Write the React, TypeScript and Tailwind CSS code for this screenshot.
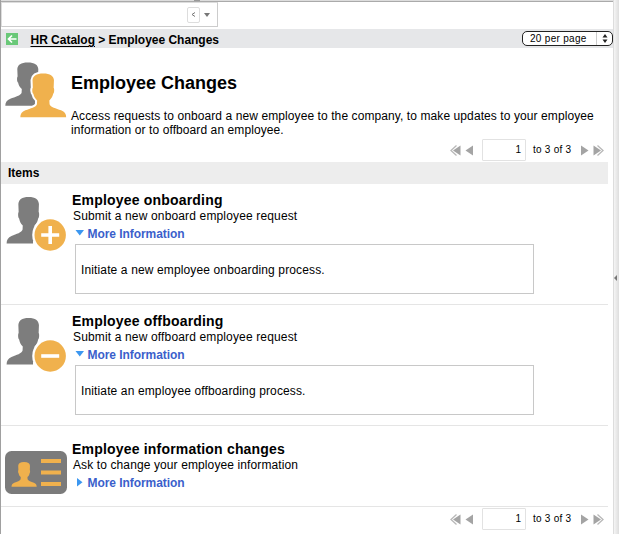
import type { ReactNode } from "react";

const PERSON =
  "M0 46.500C0 43 1.500 40.500 5 39C10 37 15.500 35.500 16.300 32.500L16.500 28.500C14.300 26.500 13.200 24 12.800 21.500C11.700 21 11.400 16 12.300 15L12 7C12.500 2.500 15.500 0 22.500 0C29.500 0 32.500 2.500 33 7L32.700 15C33.600 16 33.300 21 32.200 21.500C31.800 24 30.700 26.500 28.500 28.500L28.700 32.500C29.500 35.500 35 37 40 39C43.500 40.500 45 43 45 46.500Z";

function PeopleIcon() {
  return (
    <svg width="62" height="56" viewBox="0 0 62 56" className="block">
      <path d={PERSON} transform="translate(.3 .5) scale(1 .93)" fill="#7d7d7d" />
      <path d={PERSON} transform="translate(15.300 11.500) scale(1.02 .945)" fill="#f0b14d" stroke="#fff" strokeWidth="4" paintOrder="stroke" />
      <path d="M0 55.500H62V60H0z" fill="#fff" />
    </svg>
  );
}

function BadgePersonIcon({ plus }: { plus: boolean }) {
  return (
    <svg width="61" height="56" viewBox="0 0 61 56" className="block">
      <path d={PERSON} transform="translate(.600 0) scale(.98 1)" fill="#7d7d7d" />
      <circle cx="44.2" cy="38" r="18" fill="#fff" />
      <path d="M27 44H61V56H27z" fill="#fff" />
      <circle cx="44.2" cy="38" r="15.700" fill="#f0b14d" />
      <path d={plus ? "M35.200 38H53.200M44.200 29V47" : "M35.200 38H53.200"} stroke="#fff" strokeWidth="3.600" />
    </svg>
  );
}

function CardIcon() {
  return (
    <svg width="62" height="43" viewBox="0 0 62 43" className="block">
      <rect width="62" height="43" rx="6.500" fill="#7b7b7b" />
      <path d={PERSON} transform="translate(6.500 11) scale(.56 .53)" fill="#f0b14d" />
      <path d="M36 10H56M36 21.500H56M36 33H56" stroke="#f0b14d" strokeWidth="4.200" />
    </svg>
  );
}

function Arrows({ flip }: { flip?: boolean }) {
  return (
    <svg width="24" height="11" viewBox="0 0 24 11" className={flip ? "block -scale-x-100" : "block"}>
      <path d="M6.500 0.500L1 5.500L6.500 10.500" fill="none" stroke="#b8b8b8" strokeWidth="1.300" />
      <path d="M10.500 0.500V10.500L3 5.500z" fill="#a4a4a4" />
      <path d="M23 0.500V10.500L15.500 5.500z" fill="#a4a4a4" />
    </svg>
  );
}

function Pager() {
  return (
    <div className="flex h-[22px] items-center pl-[449px] text-[10px] leading-[22px]">
      <Arrows />
      <div className="ml-2 h-[22px] w-11 rounded-[1px] border border-[#e2e2e2] pr-1 text-right leading-[20px]">1</div>
      <span className="ml-[7px] w-[40px] whitespace-nowrap tracking-[0.25px]">to 3 of 3</span>
      <div className="ml-[7px]">
        <Arrows flip />
      </div>
    </div>
  );
}

function More({ open }: { open: boolean }) {
  return (
    <div className="flex h-[16px] items-center text-xs leading-[16px] font-bold text-[#3b5fcb]">
      <svg width="12" height="12" viewBox="0 0 12 12" className="mr-[3.500px]">
        <path d={open ? "M3.500 2H12L7.800 7.500z" : "M5 1V9.500L10.500 5.200z"} fill="#3c97f0" />
      </svg>
      <a className="whitespace-nowrap tracking-[-0.060px]">More Information</a>
    </div>
  );
}

interface ItemProps {
  icon: ReactNode;
  title: string;
  text: string;
  detail?: string;
}

function Item({ icon, title, text, detail }: ItemProps) {
  return (
    <section className={`mr-[5px] flex border-b border-[#e5e5e5] ${detail ? "h-[121px] pt-2" : "h-[81px] pt-[15px]"}`}>
      <div className={detail ? "w-[71px] pt-[5px] pl-[5px]" : "w-[71px] pt-[10px] pl-[4px]"}>{icon}</div>
      <div>
        <h2 className="h-4 text-sm leading-4 font-bold tracking-[0.19px] whitespace-nowrap">{title}</h2>
        <p className={`h-[15px] pt-px pl-px text-xs leading-[15px] whitespace-nowrap ${detail ? "tracking-[0.15px]" : "tracking-[0.11px]"}`}>{text}</p>
        <div className="pt-[3px]">
          <More open={!!detail} />
        </div>
        {detail && (
          <div className="mt-[2px] ml-[3px] flex h-[50px] w-[459px] items-center border border-[#c8c8c8] pt-0.5 pl-[5px] text-xs tracking-[0.13px]">{detail}</div>
        )}
      </div>
    </section>
  );
}

export default function App() {
  return (
    <div className="flex h-[534px] w-[619px] overflow-hidden bg-white font-['Liberation_Sans',Arial,sans-serif] text-black">
      <main className="w-[613px] border-l border-[#a0a0a0]">
        <div className="h-[2px] border-b border-[#aaa] bg-[#ddd]">
          <div className="ml-[193px] h-px w-[6px] bg-[#999]" />
        </div>
        <div className="flex h-[25px] w-[217px] items-center justify-end border border-t-[#ddd] border-r-[#ccc] border-b-[#ccc] border-l-[#ddd] pr-[7px]">
          <div className="flex h-4 w-[13px] items-center justify-center rounded-[2px] border border-[#ddd]">
            <svg width="5" height="5" viewBox="0 0 5 5"><path d="M4 .5L1 2.500L4 4.500" fill="none" stroke="#777" /></svg>
          </div>
          <svg width="6" height="4" viewBox="0 0 6 4" className="ml-1"><path d="M0 0H6L3 4z" fill="#777" /></svg>
        </div>
        <header className="mt-[2px] flex h-[19px] items-center bg-[#e6e7e9] text-xs font-bold">
          <svg width="12" height="12" viewBox="0 0 12 12" className="ml-[5px]">
            <rect width="12" height="12" fill="#69c878" />
            <path d="M10.500 6H2.500M6 2.500L2.500 6L6 9.500" fill="none" stroke="#fff" strokeWidth="1.700" />
          </svg>
          <nav className="ml-[12.500px] pt-[3px] leading-4 tracking-[-0.020px] whitespace-nowrap">
            <a className="underline underline-offset-2">HR Catalog</a> &gt; Employee Changes
          </nav>
          <div className="ml-auto flex h-[15px] w-[91px] items-center rounded-[5px] border-[1.5px] border-[#222] bg-white pl-[7px] text-[10px] leading-3 font-normal">
            <span className="tracking-[0.3px] whitespace-nowrap">20 per page</span>
            <span className="ml-auto flex h-full w-4 items-center justify-center border-l border-[#ccc]">
              <svg width="6" height="9" viewBox="0 0 6 9"><path d="M0.500 3.500L3 0L5.500 3.500zM0.500 5.500L3 9L5.500 5.500z" fill="#222" /></svg>
            </span>
          </div>
        </header>
        <section className="flex h-[91px] pt-[14px] pl-[4px]">
          <PeopleIcon />
          <div className="ml-1 pt-[10px]">
            <h1 className="h-[22px] text-lg leading-[22px] font-bold whitespace-nowrap">Employee Changes</h1>
            <p className="mt-[15px] text-xs leading-[14px] tracking-[0.09px] whitespace-nowrap">
              Access requests to onboard a new employee to the company, to make updates to your employee
              <br />
              information or to offboard an employee.
            </p>
          </div>
        </section>
        <Pager />
        <h2 className="mt-px mr-[5px] h-[22px] bg-[#ededed] pl-[7px] text-xs leading-[22px] font-bold">Items</h2>
        <Item icon={<BadgePersonIcon plus />} title="Employee onboarding" text="Submit a new onboard employee request" detail="Initiate a new employee onboarding process." />
        <Item icon={<BadgePersonIcon plus={false} />} title="Employee offboarding" text="Submit a new offboard employee request" detail="Initiate an employee offboarding process." />
        <Item icon={<CardIcon />} title="Employee information changes" text="Ask to change your employee information" />
        <div className="pt-px">
          <Pager />
        </div>
      </main>
      <aside className="flex w-[6px] items-center border-l border-[#ddd] bg-gradient-to-r from-[#f5f5f5] to-[#dedede]">
        <svg width="3" height="6" viewBox="0 0 3 6" className="mt-[22px]"><path d="M3 0V6L0 3z" fill="#777" /></svg>
      </aside>
    </div>
  );
}
